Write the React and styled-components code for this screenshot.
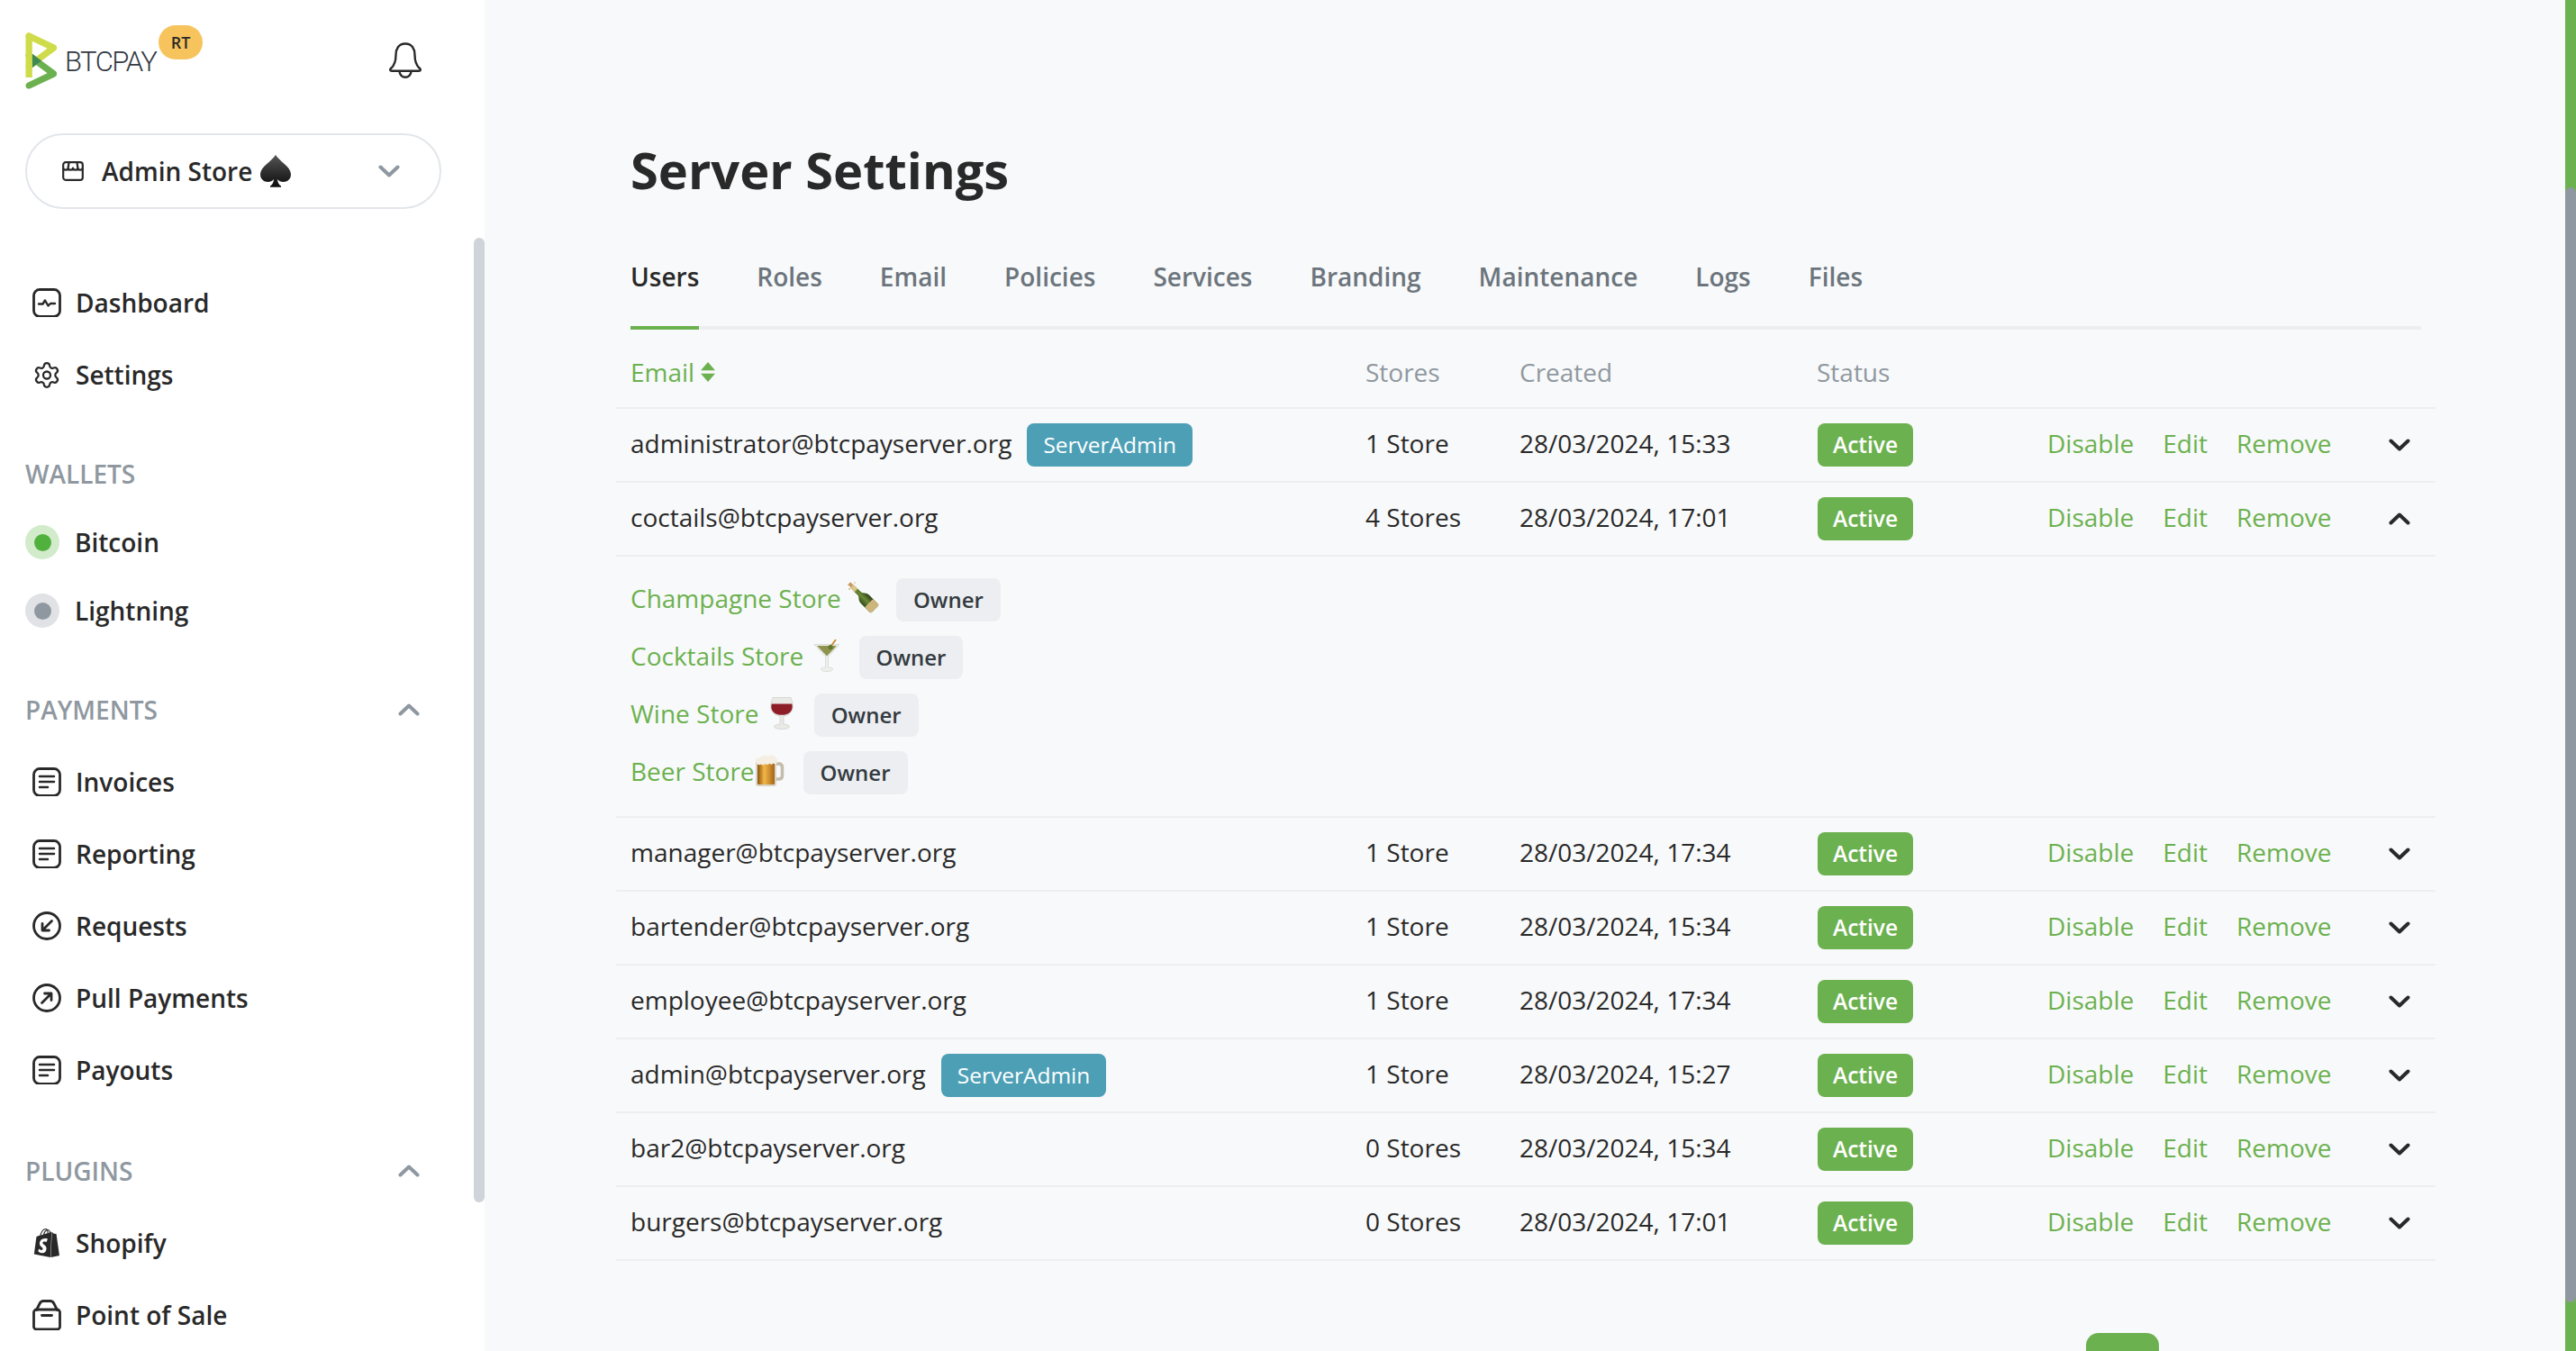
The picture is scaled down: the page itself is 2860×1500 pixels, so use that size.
import React from "react";
import styled, { createGlobalStyle } from "styled-components";
import { Settings as GearIcon } from "lucide-react";
import { SiShopify } from "react-icons/si";

const GlobalStyle = createGlobalStyle`
  html, body {
    margin: 0;
    padding: 0;
    background: #f8f9fa;
    overflow: hidden;
  }
  * { box-sizing: border-box; }
`;

const green = "#6cb14f";
const ink = "#292929";
const muted = "#8f98a0";

const Page = styled.div`
  display: flex;
  width: 2860px;
  height: 1500px;
  overflow: hidden;
  font-family: "Open Sans", "Liberation Sans", sans-serif;
  font-size: 28px;
  line-height: 42px;
  color: ${ink};
  background: #f8f9fa;
`;

/* ---------- sidebar ---------- */

const Sidebar = styled.aside`
  position: relative;
  flex: 0 0 538px;
  height: 1500px;
  padding: 0 28px;
  background: #ffffff;
  overflow: hidden;
`;

const SideThumb = styled.div`
  position: absolute;
  top: 264px;
  right: 0;
  width: 12px;
  height: 1071px;
  border-radius: 6px;
  background: #ced4da;
`;

const Brand = styled.div`
  display: flex;
  justify-content: space-between;
  height: 148px;
  padding-top: 36px;
`;

const LogoLink = styled.div`
  position: relative;
  display: flex;
  width: 200px;
  height: 63px;
`;

const LogoWord = styled.span`
  margin: 9px 0 0 9px;
  font-family: "Roboto", "Open Sans", sans-serif;
  font-weight: 300;
  font-size: 31px;
  line-height: 48px;
  letter-spacing: -1.5px;
  color: #333a41;
`;

const RtBadge = styled.span`
  position: absolute;
  top: -8px;
  left: 148px;
  width: 49px;
  height: 38px;
  border-radius: 19px;
  background: #f7c35c;
  font-size: 18px;
  font-weight: 600;
  line-height: 38px;
  text-align: center;
  color: #292929;
`;

const BellButton = styled.div`
  margin: 11px 41px 0 0;
  height: 40px;
  width: 38px;
`;

const StorePill = styled.div`
  display: flex;
  align-items: center;
  width: 462px;
  height: 84px;
  padding: 0 44px 0 39px;
  border: 2px solid #e2e6ea;
  border-radius: 42px;
  background: #ffffff;
`;

const StoreName = styled.span`
  flex: 1;
  display: flex;
  align-items: center;
  margin-left: 20px;
  font-weight: 600;
`;

const SpadeBox = styled.svg`
  display: block;
  margin-left: 8px;
`;

const NavBlock = styled.nav`
  margin-top: ${(p) => p.$top}px;
`;

const NavRow = styled.div`
  display: flex;
  align-items: center;
  gap: 16px;
  height: ${(p) => p.$height || 80}px;
  padding-left: 8px;
  font-weight: 600;
`;

const WalletRow = styled(NavRow)`
  gap: 17px;
  padding-left: 0;
`;

const IconSlot = styled.span`
  display: flex;
  justify-content: center;
  align-items: center;
  flex: 0 0 32px;
  width: 32px;
  height: 36px;
`;

const StatusDot = styled.span`
  display: flex;
  justify-content: center;
  align-items: center;
  flex: 0 0 38px;
  height: 38px;
  border-radius: 50%;
  background: ${(p) => (p.$on ? "#d1ebcb" : "#e0e2e5")};
  &::after {
    content: "";
    width: 19px;
    height: 19px;
    border-radius: 50%;
    background: ${(p) => (p.$on ? "#51b13e" : "#8f98a0")};
  }
`;

const SectionLabel = styled.div`
  display: flex;
  justify-content: space-between;
  align-items: center;
  height: 44px;
  padding-right: 44px;
  margin-bottom: ${(p) => p.$gap}px;
  font-weight: 600;
  color: ${muted};
`;

/* ---------- main column ---------- */

const Main = styled.main`
  flex: 1;
  height: 1500px;
  padding: 154px 160px 0 162px;
  overflow: hidden;
`;

const Title = styled.h2`
  margin: 0 0 63px;
  font-size: 56px;
  line-height: 69px;
  font-weight: 700;
  color: ${ink};
`;

const Tabs = styled.div`
  display: flex;
  gap: 64px;
  border-bottom: 4px solid #eceef1;
  height: 80px;
`;

const Tab = styled.a`
  height: 80px;
  padding-bottom: 32px;
  border-bottom: 4px solid ${(p) => (p.$active ? green : "transparent")};
  font-weight: 600;
  color: ${(p) => (p.$active ? ink : "#6c757d")};
`;

const Table = styled.table`
  width: 2020px;
  margin-left: -16px;
  border-collapse: separate;
  border-spacing: 0;
  table-layout: fixed;
`;

const Th = styled.th`
  height: 88px;
  padding: 0 16px 18px;
  vertical-align: bottom;
  text-align: left;
  font-weight: 400;
  color: ${muted};
  border-bottom: 2px solid #eceef1;
`;

const SortHead = styled.span`
  display: inline-flex;
  align-items: center;
  gap: 6px;
  color: ${green};
`;

const Td = styled.td`
  height: 82px;
  padding: 0 16px 4px;
  vertical-align: middle;
  border-bottom: 2px solid #eceef1;
  white-space: nowrap;
`;

const EmailCell = styled.div`
  display: flex;
  align-items: center;
  gap: 17px;
`;

const Badge = styled.span`
  display: inline-block;
  height: 48px;
  padding: 0 18px;
  border-radius: 8px;
  background: ${(p) => p.$bg};
  color: ${(p) => p.$fg || "#ffffff"};
  font-size: 24.5px;
  font-weight: 500;
  line-height: 48px;
`;

const AdminBadge = styled(Badge)`
  margin-top: 3px;
`;

const OwnerBadge = styled(Badge)`
  padding: 0 19px;
  font-weight: 600;
  font-size: 24px;
`;

const StatusBadge = styled(Badge)`
  display: block;
  width: 106px;
  padding: 0;
  text-align: center;
  font-weight: 600;
  margin: 4px 0 0 1px;
`;

const Actions = styled.div`
  display: flex;
  gap: 32px;
  margin-left: -1px;
`;

const ActionLink = styled.a`
  color: ${green};
`;

const ToggleCell = styled(Td)`
  padding: 0 0 2px;
  text-align: center;
`;

const Chevron = styled.svg`
  display: block;
  flex: none;
`;

const ToggleBox = styled.div`
  display: flex;
  justify-content: center;
  padding-top: 2px;
`;

const StoreList = styled.div`
  display: flex;
  flex-direction: column;
  gap: 16px;
  padding: 24px 0 20px;
`;

const StoreLine = styled.div`
  display: flex;
  align-items: center;
  height: 48px;
  gap: 18px;
`;

const StoreLink = styled.a`
  display: inline-flex;
  align-items: center;
  white-space: pre;
  color: ${green};
  margin-top: -4px;
`;

const EmojiBox = styled.svg`
  display: block;
  flex: 0 0 36px;
  width: 36px;
  height: 36px;
`;

const Pager = styled.div`
  display: flex;
  justify-content: flex-end;
  margin-top: 80px;
  padding-right: 291px;
`;

const PageButton = styled.div`
  width: 81px;
  height: 64px;
  border-radius: 14px;
  background: ${green};
`;

const PageScroll = styled.div`
  flex: 0 0 12px;
  display: flex;
  flex-direction: column;
  height: 1500px;
  background: ${green};
  padding-top: 208px;
`;

const PageThumb = styled.div`
  height: 1238px;
  border-radius: 6px;
  background: #8f98a0;
`;

/* ---------- drawings ---------- */

const Line = (props) => (
  <svg
    width="32"
    height="32"
    viewBox="0 0 32 32"
    fill="none"
    stroke={ink}
    strokeWidth="2.8"
    strokeLinecap="round"
    strokeLinejoin="round"
    {...props}
  />
);

const Logo = () => (
  <svg width="35" height="63" viewBox="0 0 46 84">
    <path fill="#6cb14f" d="M5.209 83.433a4.862 4.862 0 01-2.086-9.253L32.43 60.274 2.323 38.093a4.861 4.861 0 015.766-7.826l36.647 26.999a4.864 4.864 0 01-.799 8.306L7.289 82.964a4.866 4.866 0 01-2.08.469" />
    <path fill="#cfdc4a" d="M5.211 54.684a4.86 4.86 0 01-2.887-8.774L32.43 23.73 3.123 9.821a4.861 4.861 0 014.166-8.784l36.648 17.394a4.86 4.86 0 01.799 8.305l-36.647 27a4.844 4.844 0 01-2.878.948" />
    <path fill="#3f8a52" d="M10.066 31.725v20.553L24.01 42.006z" />
    <path fill="#cfdc4a" d="M10.066 5.431A4.861 4.861 0 005.206.57 4.86 4.86 0 00.347 5.431v61.165h9.72V5.431h-.001z" />
  </svg>
);

const Bell = () => (
  <svg width="38" height="40" viewBox="0 0 38 40" fill="none" stroke={ink} strokeWidth="2.4" strokeLinejoin="round">
    <path d="M19 1.500c-7.500 0-10.500 6-10.500 12.500 0 8-2 12-5.500 15-1.500 1.300-1 2.800 1 2.800h30c2 0 2.500-1.500 1-2.800-3.500-3-5.500-7-5.500-15C29.500 7.500 26.500 1.500 19 1.500z" />
    <path d="M12.500 32c0 4 3 6.800 6.500 6.800s6.500-2.800 6.500-6.800" />
  </svg>
);

const StoreIcon = () => (
  <svg width="24" height="22" viewBox="0 0 24 22" fill="none" stroke={ink} strokeWidth="2.2" strokeLinejoin="round">
    <path d="M4 1.200h16a2.800 2.800 0 012.800 2.800v14a2.800 2.800 0 01-2.800 2.800H4A2.800 2.800 0 011.200 18V4A2.800 2.800 0 014 1.200z" />
    <path d="M1.200 7.500c0 2.800 5.400 2.800 5.400 0 0 2.800 5.400 2.800 5.400 0 0 2.800 5.400 2.800 5.400 0 0 2.800 5.400 2.800 5.400 0" />
    <path d="M7.500 1.500l-.9 6M16.500 1.500l.9 6" />
  </svg>
);

const Spade = () => (
  <SpadeBox width="36" height="36" viewBox="0 0 36 36">
    <defs>
      <linearGradient id="spadeFill" x1="0" y1="0" x2="0" y2="1">
        <stop offset="0" stopColor="#555555" />
        <stop offset="1" stopColor="#0c0c0c" />
      </linearGradient>
    </defs>
    <path fill="url(#spadeFill)" d="M18 0C14 7 1 13 1 21.500 1 27 5 30 9.500 30c2.800 0 5-1 6.500-3-.3 3.500-1.500 6-4 7.500v1.300h12v-1.300c-2.500-1.500-3.700-4-4-7.500 1.500 2 3.700 3 6.500 3C31 30 35 27 35 21.500 35 13 22 7 18 0z" />
  </SpadeBox>
);

const Down = ({ color = ink }) => (
  <Chevron width="24" height="14" viewBox="0 0 24 14" fill="none" stroke={color} strokeWidth="4" strokeLinecap="round" strokeLinejoin="round">
    <path d="M2.500 2.500L12 11.500l9.500-9" />
  </Chevron>
);

const Up = ({ color = ink }) => (
  <Chevron width="24" height="14" viewBox="0 0 24 14" fill="none" stroke={color} strokeWidth="4" strokeLinecap="round" strokeLinejoin="round">
    <path d="M2.500 11.500L12 2.500l9.500 9" />
  </Chevron>
);

const DashboardIcon = () => (
  <Line>
    <rect x="1.500" y="1.500" width="29" height="30" rx="6.500" />
    <path d="M7 17.500h4.500l2.500-4 3.500 6 2.500-2.500H25" strokeWidth="2.400" />
  </Line>
);

const ListIcon = () => (
  <Line>
    <rect x="1.500" y="1.500" width="29" height="30" rx="6.500" />
    <path d="M8 10h16M8 16h16M8 22h9" strokeWidth="2.500" />
  </Line>
);

const RequestIcon = () => (
  <Line>
    <circle cx="16" cy="16" r="14.500" />
    <path d="M21.500 10.500L11 21M11 13.500V21h7.500" />
  </Line>
);

const PullIcon = () => (
  <Line>
    <circle cx="16" cy="16" r="14.500" />
    <path d="M10.500 21.500L21 11M13.500 11H21v7.500" />
  </Line>
);

const PosIcon = () => (
  <Line height="34" viewBox="0 0 32 34">
    <path d="M4.500 11h23a3 3 0 013 3l0 16a3 3 0 01-3 3h-23a3 3 0 01-3-3l0-16a3 3 0 013-3z" />
    <path d="M4.500 11.500L8 4.500C9 2.500 10.500 1.500 12 1.500h8c1.500 0 3 1 4 3l3.500 7" />
    <path d="M10.500 17.500h11" />
  </Line>
);

const SortIcon = () => (
  <svg width="18" height="22" viewBox="0 0 18 22" fill={green}>
    <path d="M9 0l8 9.300H1zM9 22l-8-9.300h16z" />
  </svg>
);

const ChampagneEmoji = () => (
  <EmojiBox viewBox="0 0 36 36">
    <defs>
      <linearGradient id="bottleGlass" x1="0" x2="1" y1="0" y2="0">
        <stop offset="0" stopColor="#2f4a1a" />
        <stop offset="0.5" stopColor="#6c8a35" />
        <stop offset="1" stopColor="#2a3f17" />
      </linearGradient>
    </defs>
    <g transform="rotate(-45 18 18)">
      <path fill="url(#bottleGlass)" d="M15.500 3h5v8c0 3 4 4 4 9v13c0 1.500-1 2.500-2.500 2.500h-8c-1.500 0-2.500-1-2.500-2.500V20c0-5 4-6 4-9z" />
      <rect x="15.300" y="-1" width="5.400" height="7" fill="#d8c48c" />
      <rect x="16" y="-5" width="4" height="4.500" fill="#c89a62" />
      <rect x="11.500" y="26" width="13" height="9.500" rx="1" fill="#cdb67c" />
    </g>
    <circle cx="2" cy="8" r="0.900" fill="#c9b17a" />
    <circle cx="8" cy="1" r="0.800" fill="#c9b17a" />
    <circle cx="1" cy="3" r="0.700" fill="#c9b17a" />
  </EmojiBox>
);

const CocktailEmoji = () => (
  <EmojiBox viewBox="0 0 36 36">
    <path fill="#eef0ec" stroke="#c9ccc8" strokeWidth="0.600" d="M4 5.500h28L19.500 19v12c3 .3 5 1 5 2 0 1.500-3 2.500-6.500 2.500s-6.500-1-6.500-2.500c0-1 2-1.700 5-2V19z" />
    <path fill="#8f9350" d="M7 7h22L18 18.500z" />
    <path d="M28 0l-8 11" stroke="#c98a2c" strokeWidth="1.800" />
    <circle cx="22" cy="8.500" r="2.600" fill="#5f7a2c" />
  </EmojiBox>
);

const WineEmoji = () => (
  <EmojiBox viewBox="0 0 36 36">
    <path fill="#e9e9e6" stroke="#c7c7c2" strokeWidth="0.600" d="M8 0.500h20c2 5 3 10 1.500 14-1.500 3.500-5 6-9.500 6.500v9c3.500.3 6.500 1.200 6.500 2.700 0 1.700-3.800 2.800-8.500 2.800s-8.500-1.100-8.500-2.800c0-1.500 3-2.400 6.500-2.700v-9c-4.500-.5-8-3-9.500-6.500C5 10.500 6 5.500 8 0.500z" />
    <path fill="#8d1d26" d="M6.700 7.500h22.600c.6 2.700.6 5-.6 7.300-1.500 3-5.500 5-10.700 5s-9.200-2-10.700-5C6.100 12.500 6.100 10.200 6.700 7.500z" />
  </EmojiBox>
);

const BeerEmoji = () => (
  <EmojiBox viewBox="0 0 36 36">
    <defs>
      <linearGradient id="beerFill" x1="0" x2="1" y1="0" y2="0">
        <stop offset="0" stopColor="#8c5410" />
        <stop offset="0.4" stopColor="#f2b646" />
        <stop offset="1" stopColor="#a5651a" />
      </linearGradient>
    </defs>
    <path fill="none" stroke="#c4bdab" strokeWidth="3.500" d="M22 10h4.500c2.500 0 4 1.500 4 4v9c0 2.500-1.500 4-4 4H22" />
    <rect x="1" y="4" width="23" height="31" rx="3" fill="#d9d3c2" />
    <rect x="3" y="8" width="19" height="25" rx="1.500" fill="url(#beerFill)" />
    <path fill="#f4efe2" d="M1 8c-.5-3 2-5 4-4.500C7 .5 12 0 14.500 2 18-.5 22 .5 24 4c1.500 1 1.500 4.500 0 6-1.500 1-2.500 0-3.500-.5-1 1.500-2.500 1.500-4 .3-1.500 1.500-3.500 1.500-5 .2-1.500 1.500-3 2-4.500.5C5 12 3 11.500 1 8z" />
  </EmojiBox>
);

/* ---------- data ---------- */

const users = [
  { email: "manager@btcpayserver.org", stores: "1 Store", created: "28/03/2024, 17:34" },
  { email: "bartender@btcpayserver.org", stores: "1 Store", created: "28/03/2024, 15:34" },
  { email: "employee@btcpayserver.org", stores: "1 Store", created: "28/03/2024, 17:34" },
  { email: "admin@btcpayserver.org", stores: "1 Store", created: "28/03/2024, 15:27", admin: true },
  { email: "bar2@btcpayserver.org", stores: "0 Stores", created: "28/03/2024, 15:34" },
  { email: "burgers@btcpayserver.org", stores: "0 Stores", created: "28/03/2024, 17:01" },
];

const tabs = ["Users", "Roles", "Email", "Policies", "Services", "Branding", "Maintenance", "Logs", "Files"];

const stores = [
  { name: "Champagne Store ", icon: <ChampagneEmoji /> },
  { name: "Cocktails Store ", icon: <CocktailEmoji /> },
  { name: "Wine Store ", icon: <WineEmoji /> },
  { name: "Beer Store", icon: <BeerEmoji /> },
];

const UserRow = ({ user, open }) => (
  <tr>
    <Td>
      <EmailCell>
        {user.email}
        {user.admin && <AdminBadge $bg="#4d9fb6">ServerAdmin</AdminBadge>}
      </EmailCell>
    </Td>
    <Td>{user.stores}</Td>
    <Td>{user.created}</Td>
    <Td>
      <StatusBadge $bg={green}>Active</StatusBadge>
    </Td>
    <Td>
      <Actions>
        <ActionLink>Disable</ActionLink>
        <ActionLink>Edit</ActionLink>
        <ActionLink>Remove</ActionLink>
      </Actions>
    </Td>
    <ToggleCell>
      <ToggleBox>{open ? <Up /> : <Down />}</ToggleBox>
    </ToggleCell>
  </tr>
);

const SideNav = ({ icon, children }) => (
  <NavRow>
    <IconSlot>{icon}</IconSlot>
    {children}
  </NavRow>
);

export default function App() {
  return (
    <Page>
      <GlobalStyle />
      <Sidebar>
        <Brand>
          <LogoLink>
            <Logo />
            <LogoWord>BTCPAY</LogoWord>
            <RtBadge>RT</RtBadge>
          </LogoLink>
          <BellButton>
            <Bell />
          </BellButton>
        </Brand>
        <StorePill>
          <StoreIcon />
          <StoreName>
            Admin Store
            <Spade />
          </StoreName>
          <Down color={muted} />
        </StorePill>

        <NavBlock $top={64}>
          <SideNav icon={<DashboardIcon />}>Dashboard</SideNav>
          <SideNav icon={<GearIcon size={43} strokeWidth={1.7} color={ink} />}>Settings</SideNav>
        </NavBlock>

        <NavBlock $top={48}>
          <SectionLabel $gap={16}>WALLETS</SectionLabel>
          <WalletRow $height={76}>
            <StatusDot $on />
            Bitcoin
          </WalletRow>
          <WalletRow $height={76}>
            <StatusDot />
            Lightning
          </WalletRow>
        </NavBlock>

        <NavBlock $top={50}>
          <SectionLabel $gap={18}>
            PAYMENTS
            <Up color={muted} />
          </SectionLabel>
          <SideNav icon={<ListIcon />}>Invoices</SideNav>
          <SideNav icon={<ListIcon />}>Reporting</SideNav>
          <SideNav icon={<RequestIcon />}>Requests</SideNav>
          <SideNav icon={<PullIcon />}>Pull Payments</SideNav>
          <SideNav icon={<ListIcon />}>Payouts</SideNav>
        </NavBlock>

        <NavBlock $top={50}>
          <SectionLabel $gap={18}>
            PLUGINS
            <Up color={muted} />
          </SectionLabel>
          <SideNav icon={<SiShopify size={34} color={ink} />}>Shopify</SideNav>
          <SideNav icon={<PosIcon />}>Point of Sale</SideNav>
        </NavBlock>
        <SideThumb />
      </Sidebar>

      <Main>
        <Title>Server Settings</Title>
        <Tabs>
          {tabs.map((name) => (
            <Tab key={name} $active={name === "Users"}>
              {name}
            </Tab>
          ))}
        </Tabs>
        <Table>
          <colgroup>
            <col width="816" />
            <col width="171" />
            <col width="330" />
            <col width="257" />
            <col width="366" />
            <col width="80" />
          </colgroup>
          <thead>
            <tr>
              <Th>
                <SortHead>
                  Email
                  <SortIcon />
                </SortHead>
              </Th>
              <Th>Stores</Th>
              <Th>Created</Th>
              <Th>Status</Th>
              <Th />
              <Th />
            </tr>
          </thead>
          <tbody>
            <UserRow user={{ email: "administrator@btcpayserver.org", stores: "1 Store", created: "28/03/2024, 15:33", admin: true }} />
            <UserRow user={{ email: "coctails@btcpayserver.org", stores: "4 Stores", created: "28/03/2024, 17:01" }} open />
            <tr>
              <Td colSpan={6}>
                <StoreList>
                  {stores.map((store) => (
                    <StoreLine key={store.name}>
                      <StoreLink>
                        {store.name}
                        {store.icon}
                      </StoreLink>
                      <OwnerBadge $bg="#eceef1" $fg="#343a40">
                        Owner
                      </OwnerBadge>
                    </StoreLine>
                  ))}
                </StoreList>
              </Td>
            </tr>
            {users.map((user) => (
              <UserRow key={user.email} user={user} />
            ))}
          </tbody>
        </Table>
        <Pager>
          <PageButton />
        </Pager>
      </Main>

      <PageScroll>
        <PageThumb />
      </PageScroll>
    </Page>
  );
}
